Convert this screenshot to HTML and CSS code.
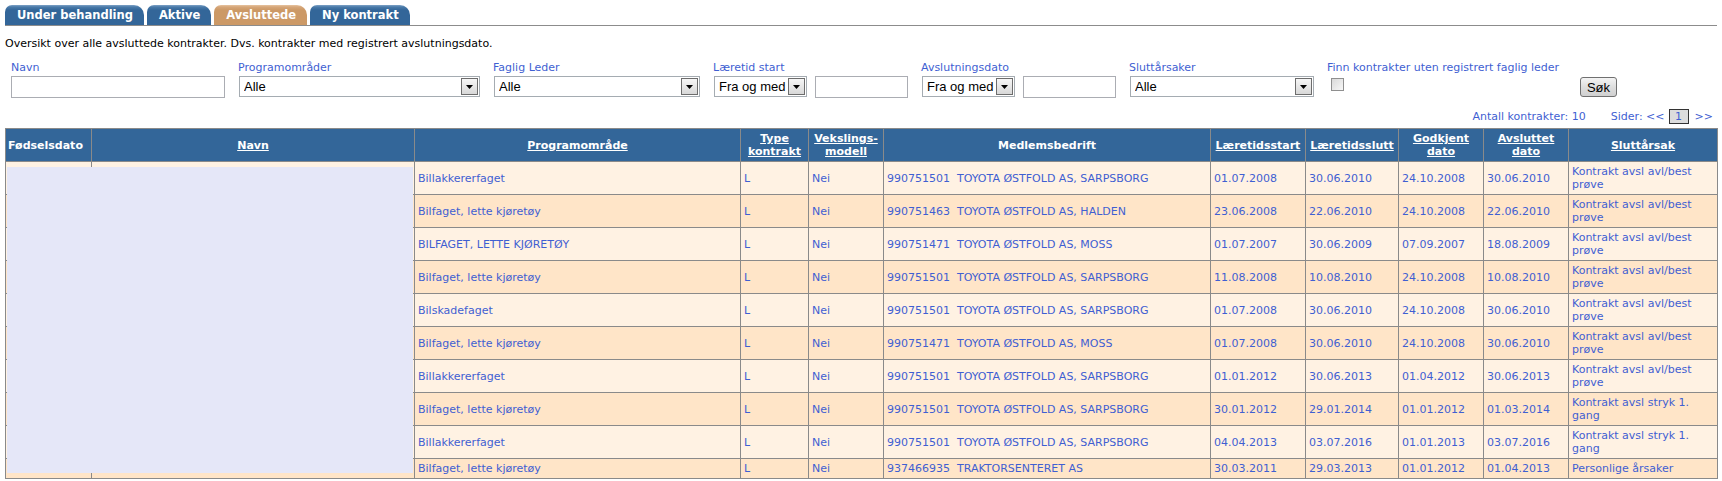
FILE: index.html
```html
<!DOCTYPE html>
<html lang="no">
<head>
<meta charset="utf-8">
<title>Avsluttede kontrakter</title>
<link rel="stylesheet" href="styles.css">
</head>
<body>
<nav class="tabs">
  <a class="tab">Under behandling</a>
  <a class="tab">Aktive</a>
  <a class="tab tab-active">Avsluttede</a>
  <a class="tab">Ny kontrakt</a>
</nav>

<p class="intro">Oversikt over alle avsluttede kontrakter. Dvs. kontrakter med registrert avslutningsdato.</p>

<form class="filters">
  <label class="flabel">Navn</label>
  <input class="txt txt-navn" type="text">

  <label class="flabel">Programområder</label>
  <div class="sel sel-prog"><select><option>Alle</option></select><span class="sel-btn"><svg width="7" height="4" viewBox="0 0 7 4"><path d="M0 0H7L3.5 4Z" fill="#000"/></svg></span></div>

  <label class="flabel">Faglig Leder</label>
  <div class="sel sel-leder"><select><option>Alle</option></select><span class="sel-btn"><svg width="7" height="4" viewBox="0 0 7 4"><path d="M0 0H7L3.5 4Z" fill="#000"/></svg></span></div>

  <label class="flabel">Læretid start</label>
  <div class="pair">
    <div class="sel sel-fra"><select><option>Fra og med</option></select><span class="sel-btn"><svg width="7" height="4" viewBox="0 0 7 4"><path d="M0 0H7L3.5 4Z" fill="#000"/></svg></span></div>
    <input class="txt txt-dato" type="text">
  </div>

  <label class="flabel">Avslutningsdato</label>
  <div class="pair">
    <div class="sel sel-fra"><select><option>Fra og med</option></select><span class="sel-btn"><svg width="7" height="4" viewBox="0 0 7 4"><path d="M0 0H7L3.5 4Z" fill="#000"/></svg></span></div>
    <input class="txt txt-dato" type="text">
  </div>

  <label class="flabel">Sluttårsaker</label>
  <div class="sel sel-slutt"><select><option>Alle</option></select><span class="sel-btn"><svg width="7" height="4" viewBox="0 0 7 4"><path d="M0 0H7L3.5 4Z" fill="#000"/></svg></span></div>

  <label class="flabel flabel-finn">Finn kontrakter uten registrert faglig leder</label>
  <div><input class="chk" type="checkbox"></div>

  <button class="sok" type="button">Søk</button>
</form>

<div class="pager">
  <span>Antall kontrakter: 10</span>
  <span class="sider">Sider: &lt;&lt;</span>
  <span class="page-cur">1</span>
  <span>&gt;&gt;</span>
</div>

<div class="grid-wrap">
<table class="grid">
  <colgroup>
    <col class="c-fdato"><col class="c-navn"><col class="c-prog"><col class="c-type"><col class="c-veks"><col class="c-bedr"><col class="c-start"><col class="c-slutt"><col class="c-godk"><col class="c-avsl"><col class="c-arsak">
  </colgroup>
  <thead>
    <tr>
      <th class="th-left">Fødselsdato</th>
      <th><a>Navn</a></th>
      <th><a>Programområde</a></th>
      <th><a>Type kontrakt</a></th>
      <th><a>Vekslings-modell</a></th>
      <th>Medlemsbedrift</th>
      <th><a>Læretidsstart</a></th>
      <th><a>Læretidsslutt</a></th>
      <th><a>Godkjent dato</a></th>
      <th><a>Avsluttet dato</a></th>
      <th><a>Sluttårsak</a></th>
    </tr>
  </thead>
  <tbody>
    <tr class="r1"><td></td><td></td><td>Billakkererfaget</td><td>L</td><td>Nei</td><td>990751501&nbsp; TOYOTA ØSTFOLD AS, SARPSBORG</td><td>01.07.2008</td><td>30.06.2010</td><td>24.10.2008</td><td>30.06.2010</td><td>Kontrakt avsl avl/best prøve</td></tr>
    <tr class="r2"><td></td><td></td><td>Bilfaget, lette kjøretøy</td><td>L</td><td>Nei</td><td>990751463&nbsp; TOYOTA ØSTFOLD AS, HALDEN</td><td>23.06.2008</td><td>22.06.2010</td><td>24.10.2008</td><td>22.06.2010</td><td>Kontrakt avsl avl/best prøve</td></tr>
    <tr class="r1"><td></td><td></td><td>BILFAGET, LETTE KJØRETØY</td><td>L</td><td>Nei</td><td>990751471&nbsp; TOYOTA ØSTFOLD AS, MOSS</td><td>01.07.2007</td><td>30.06.2009</td><td>07.09.2007</td><td>18.08.2009</td><td>Kontrakt avsl avl/best prøve</td></tr>
    <tr class="r2"><td></td><td></td><td>Bilfaget, lette kjøretøy</td><td>L</td><td>Nei</td><td>990751501&nbsp; TOYOTA ØSTFOLD AS, SARPSBORG</td><td>11.08.2008</td><td>10.08.2010</td><td>24.10.2008</td><td>10.08.2010</td><td>Kontrakt avsl avl/best prøve</td></tr>
    <tr class="r1"><td></td><td></td><td>Bilskadefaget</td><td>L</td><td>Nei</td><td>990751501&nbsp; TOYOTA ØSTFOLD AS, SARPSBORG</td><td>01.07.2008</td><td>30.06.2010</td><td>24.10.2008</td><td>30.06.2010</td><td>Kontrakt avsl avl/best prøve</td></tr>
    <tr class="r2"><td></td><td></td><td>Bilfaget, lette kjøretøy</td><td>L</td><td>Nei</td><td>990751471&nbsp; TOYOTA ØSTFOLD AS, MOSS</td><td>01.07.2008</td><td>30.06.2010</td><td>24.10.2008</td><td>30.06.2010</td><td>Kontrakt avsl avl/best prøve</td></tr>
    <tr class="r1"><td></td><td></td><td>Billakkererfaget</td><td>L</td><td>Nei</td><td>990751501&nbsp; TOYOTA ØSTFOLD AS, SARPSBORG</td><td>01.01.2012</td><td>30.06.2013</td><td>01.04.2012</td><td>30.06.2013</td><td>Kontrakt avsl avl/best prøve</td></tr>
    <tr class="r2"><td></td><td></td><td>Bilfaget, lette kjøretøy</td><td>L</td><td>Nei</td><td>990751501&nbsp; TOYOTA ØSTFOLD AS, SARPSBORG</td><td>30.01.2012</td><td>29.01.2014</td><td>01.01.2012</td><td>01.03.2014</td><td>Kontrakt avsl stryk 1. gang</td></tr>
    <tr class="r1"><td></td><td></td><td>Billakkererfaget</td><td>L</td><td>Nei</td><td>990751501&nbsp; TOYOTA ØSTFOLD AS, SARPSBORG</td><td>04.04.2013</td><td>03.07.2016</td><td>01.01.2013</td><td>03.07.2016</td><td>Kontrakt avsl stryk 1. gang</td></tr>
    <tr class="r2"><td></td><td></td><td>Bilfaget, lette kjøretøy</td><td>L</td><td>Nei</td><td>937466935&nbsp; TRAKTORSENTERET AS</td><td>30.03.2011</td><td>29.03.2013</td><td>01.01.2012</td><td>01.04.2013</td><td>Personlige årsaker</td></tr>
  </tbody>
</table>
<div class="redact"></div>
</div>
</body>
</html>
```

FILE: styles.css
```css
html, body {
  margin: 0;
  padding: 0;
  background: #fff;
}
body {
  padding: 5px 5px 0;
  font-family: "DejaVu Sans", Verdana, sans-serif;
  font-size: 11px;
  color: #000;
}

/* Tabs */
.tabs {
  display: flex;
  gap: 3px;
  height: 20px;
  border-bottom: 1px solid #8c8c8c;
}
.tab {
  display: block;
  height: 20px;
  box-sizing: border-box;
  padding: 1px 11px 0 12px;
  line-height: 19px;
  font-size: 11.5px;
  font-weight: bold;
  color: #fff;
  border-radius: 7px 10px 0 0;
  background: linear-gradient(#7ea2c6 0, #4a7aa9 2px, #336699 5px, #336699 100%);
  white-space: nowrap;
}
.tab-active {
  background: linear-gradient(#e6c3a0 0, #d6a679 2px, #cc9966 5px, #cc9966 100%);
}

/* Intro */
.intro {
  margin: 11px 0 0;
  line-height: 14px;
}

/* Filters */
.filters {
  display: grid;
  grid-template-rows: 13px 22px;
  grid-auto-flow: column;
  justify-content: start;
  column-gap: 13px;
  row-gap: 2px;
  margin: 10px 0 0 6px;
}
.flabel {
  line-height: 13px;
  color: #3f5fd2;
  white-space: nowrap;
}
.flabel-finn { width: 240px; }
.txt {
  box-sizing: border-box;
  height: 22px;
  margin: 0;
  border: 1px solid #abadb3;
  background: #fff;
  font: 13px "Liberation Sans", Arial, sans-serif;
  padding: 0 3px;
}
.txt-navn { width: 214px; }
.txt-dato { width: 93px; }

.pair {
  display: flex;
  gap: 8px;
}

.sel {
  display: flex;
  box-sizing: border-box;
  height: 21px;
  border: 1px solid #a5acb2;
  background: #fff;
  margin-left: 1px;
}
.sel select {
  flex: 1;
  min-width: 0;
  -webkit-appearance: none;
  appearance: none;
  border: 0;
  margin: 0;
  padding: 0 0 0 4px;
  background: transparent;
  font: 13px "Liberation Sans", Arial, sans-serif;
  color: #000;
  outline: none;
}
.sel-btn {
  display: flex;
  align-items: center;
  justify-content: center;
  box-sizing: border-box;
  width: 17px;
  margin: 1px;
  border: 1px solid #6d6d6d;
  background: linear-gradient(#f6f6f6, #d8d8d8);
}
.sel-prog { width: 241px; }
.sel-leder { width: 206px; }
.sel-fra { width: 93px; }
.sel-slutt { width: 184px; }

.chk {
  -webkit-appearance: none;
  appearance: none;
  display: block;
  width: 13px;
  height: 13px;
  margin: 2px 0 0 4px;
  border: 1px solid #8f8f8f;
  background: linear-gradient(135deg, #d9d9d9, #f7f7f7);
  box-sizing: border-box;
}

.sok {
  grid-row: 2;
  align-self: start;
  margin-top: 1px;
  width: 37px;
  height: 20px;
  padding: 0;
  border: 1px solid #707070;
  border-radius: 3px;
  background: linear-gradient(#f4f4f4, #dedede 50%, #d0d0d0);
  font: 13px "Liberation Sans", Arial, sans-serif;
  color: #000;
}

/* Pager */
.pager {
  display: flex;
  justify-content: flex-end;
  align-items: center;
  height: 15px;
  margin-top: 11px;
  padding-right: 4px;
  color: #3f5fd2;
  line-height: 13px;
}
.sider { margin-left: 25px; }
.page-cur {
  box-sizing: border-box;
  width: 20px;
  height: 15px;
  margin: 0 6px 0 4px;
  border: 1px solid #333;
  background: #dcdcdc;
  text-align: center;
  line-height: 13px;
}

/* Grid */
.grid-wrap {
  position: relative;
  margin-top: 4px;
}
.grid {
  width: 100%;
  border-collapse: collapse;
  table-layout: fixed;
}
.c-fdato { width: 86px; }
.c-navn { width: 323px; }
.c-prog { width: 326px; }
.c-type { width: 68px; }
.c-veks { width: 75px; }
.c-bedr { width: 327px; }
.c-start { width: 95px; }
.c-slutt { width: 93px; }
.c-godk { width: 85px; }
.c-avsl { width: 85px; }
.c-arsak { width: 149px; }

.grid th,
.grid td {
  border: 1px solid #8a8a8a;
  line-height: 13px;
  vertical-align: middle;
}
.grid th {
  background: #336699;
  color: #fff;
  font-weight: bold;
  padding: 3px 2px;
  text-align: center;
}
.grid th.th-left {
  text-align: left;
  padding-left: 2px;
}
.grid th a {
  color: #fff;
  text-decoration: underline;
}
.grid td {
  padding: 3px 3px;
  color: #3f5fd2;
  text-align: left;
}
.r1 td { background: #fff2e3; }
.r2 td { background: #ffe5c8; }

.redact {
  position: absolute;
  left: 2px;
  top: 39px;
  width: 406px;
  height: 306px;
  background: #e5e7f8;
}
```
